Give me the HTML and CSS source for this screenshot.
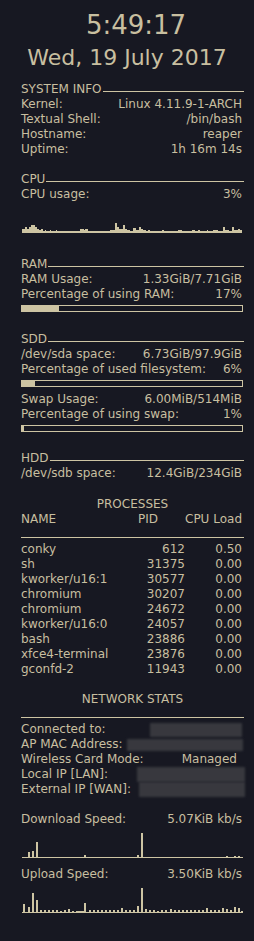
FILE: index.html
```html
<!DOCTYPE html>
<html lang="en">
<head>
    <meta charset="UTF-8">
    <title>conky</title>
    <link rel="stylesheet" href="styles.css">
</head>
<body>
    <div class="panel">
        <div class="clock">5:49:17</div>
        <div class="date">Wed, 19 July 2017</div>

        <div class="head sys"><span>SYSTEM INFO</span><i class="rule"></i></div>
        <div class="row"><span>Kernel:</span><span>Linux 4.11.9-1-ARCH</span></div>
        <div class="row"><span>Textual Shell:</span><span>/bin/bash</span></div>
        <div class="row"><span>Hostname:</span><span>reaper</span></div>
        <div class="row"><span>Uptime:</span><span>1h 16m 14s</span></div>

        <div class="head cpu"><span>CPU</span><i class="rule"></i></div>
        <div class="row"><span>CPU usage:</span><span>3%</span></div>
        <svg class="graph cpugraph" width="222" height="14" viewBox="0 0 222 14">
            <path d="M1 13 V9 H4 V7 H6 V9 H8 V7 H10 V5 H14 V7 H16 V9 H18 V10 H20 V9 H22 V11 H24 V10 H25 V11 H29 V10 H30 V11 H35 V10 H36 V11 H59 V9 H63 V10 H64 V9 H67 V11 H89 V10 H94 V3 H96 V7 H98 V9 H102 V5 H104 V9 H106 V10 H109 V11 H112 V8 H115 V10 H118 V7 H120 V9 H122 V10 H125 V11 H127 V10 H129 V11 H141 V10 H143 V11 H157 V10 H161 V11 H171 V10 H174 V11 H177 V10 H179 V11 H186 V10 H187 V11 H192 V10 H197 V11 H202 V7 H204 V10 H208 V11 H211 V7 H213 V10 H217 V9 H219 V10 H221 V13 Z"/>
        </svg>

        <div class="head ram"><span>RAM</span><i class="rule"></i></div>
        <div class="row"><span>RAM Usage:</span><span>1.33GiB/7.71GiB</span></div>
        <div class="row"><span>Percentage of using RAM:</span><span>17%</span></div>
        <div class="bar"><div class="fill" style="width: 17%"></div></div>

        <div class="head sdd"><span>SDD</span><i class="rule"></i></div>
        <div class="row"><span>/dev/sda space:</span><span>6.73GiB/97.9GiB</span></div>
        <div class="row"><span>Percentage of used filesystem:</span><span>6%</span></div>
        <div class="bar"><div class="fill" style="width: 6%"></div></div>
        <div class="row swap"><span>Swap Usage:</span><span>6.00MiB/514MiB</span></div>
        <div class="row"><span>Percentage of using swap:</span><span>1%</span></div>
        <div class="bar"><div class="fill" style="width: 1%"></div></div>

        <div class="head hdd"><span>HDD</span><i class="rule"></i></div>
        <div class="row"><span>/dev/sdb space:</span><span>12.4GiB/234GiB</span></div>

        <div class="title procs">PROCESSES</div>
        <div class="proc proc-head"><span>NAME</span><span class="pid-head">PID</span><span>CPU Load</span></div>
        <div class="line"></div>
        <div class="proc"><span>conky</span><span>612</span><span>0.50</span></div>
        <div class="proc"><span>sh</span><span>31375</span><span>0.00</span></div>
        <div class="proc"><span>kworker/u16:1</span><span>30577</span><span>0.00</span></div>
        <div class="proc"><span>chromium</span><span>30207</span><span>0.00</span></div>
        <div class="proc"><span>chromium</span><span>24672</span><span>0.00</span></div>
        <div class="proc"><span>kworker/u16:0</span><span>24057</span><span>0.00</span></div>
        <div class="proc"><span>bash</span><span>23886</span><span>0.00</span></div>
        <div class="proc"><span>xfce4-terminal</span><span>23876</span><span>0.00</span></div>
        <div class="proc"><span>gconfd-2</span><span>11943</span><span>0.00</span></div>

        <div class="title net">NETWORK STATS</div>
        <div class="line"></div>
        <div class="row"><span>Connected to:</span><span class="hidden essid"></span></div>
        <div class="row"><span>AP MAC Address:</span><span class="hidden mac"></span></div>
        <div class="row"><span>Wireless Card Mode:</span><span class="mode">Managed</span></div>
        <div class="row"><span>Local IP [LAN]:</span><span class="hidden lan"></span></div>
        <div class="row"><span>External IP [WAN]:</span><span class="hidden wan"></span></div>

        <div class="row speed"><span>Download Speed:</span><span>5.07KiB kb/s</span></div>
        <svg class="graph netgraph" width="222" height="28" viewBox="0 0 222 28">
            <rect x="1" y="27" width="221" height="1"/>
            <rect x="7" y="22" width="2" height="6"/>
            <rect x="11" y="21" width="2" height="7"/>
            <rect x="15" y="12" width="2" height="16"/>
            <rect x="63" y="25" width="2" height="3"/>
            <rect x="116" y="25" width="2" height="3"/>
            <rect x="120" y="3" width="2" height="25"/>
            <rect x="205" y="26" width="2" height="2"/>
            <rect x="213" y="26" width="2" height="2"/>
            <rect x="217" y="26" width="2" height="2"/>
        </svg>

        <div class="row speed up"><span>Upload Speed:</span><span>3.50KiB kb/s</span></div>
        <svg class="graph netgraph" width="222" height="28" viewBox="0 0 222 28">
            <rect x="1" y="27" width="221" height="1"/>
            <rect x="2" y="19" width="2" height="9"/>
            <rect x="7" y="22" width="2" height="6"/>
            <rect x="11" y="8" width="2" height="20"/>
            <rect x="15" y="15" width="2" height="13"/>
            <rect x="19" y="25" width="2" height="3"/>
            <rect x="23" y="25" width="2" height="3"/>
            <rect x="27" y="25" width="2" height="3"/>
            <rect x="31" y="25" width="2" height="3"/>
            <rect x="35" y="25" width="2" height="3"/>
            <rect x="39" y="26" width="2" height="2"/>
            <rect x="43" y="25" width="2" height="3"/>
            <rect x="47" y="24" width="2" height="4"/>
            <rect x="51" y="26" width="2" height="2"/>
            <rect x="55" y="26" width="8" height="2"/>
            <rect x="63" y="18" width="2" height="10"/>
            <rect x="68" y="25" width="2" height="3"/>
            <rect x="72" y="25" width="2" height="3"/>
            <rect x="76" y="25" width="2" height="3"/>
            <rect x="80" y="25" width="2" height="3"/>
            <rect x="84" y="25" width="2" height="3"/>
            <rect x="88" y="25" width="2" height="3"/>
            <rect x="92" y="25" width="2" height="3"/>
            <rect x="96" y="25" width="2" height="3"/>
            <rect x="100" y="23" width="2" height="5"/>
            <rect x="104" y="25" width="2" height="3"/>
            <rect x="108" y="25" width="2" height="3"/>
            <rect x="112" y="25" width="2" height="3"/>
            <rect x="116" y="21" width="2" height="7"/>
            <rect x="120" y="3" width="2" height="25"/>
            <rect x="124" y="24" width="2" height="4"/>
            <rect x="128" y="25" width="2" height="3"/>
            <rect x="132" y="25" width="2" height="3"/>
            <rect x="136" y="26" width="2" height="2"/>
            <rect x="140" y="25" width="2" height="3"/>
            <rect x="144" y="25" width="2" height="3"/>
            <rect x="149" y="24" width="2" height="4"/>
            <rect x="153" y="25" width="2" height="3"/>
            <rect x="157" y="25" width="2" height="3"/>
            <rect x="161" y="25" width="2" height="3"/>
            <rect x="165" y="25" width="2" height="3"/>
            <rect x="169" y="25" width="2" height="3"/>
            <rect x="173" y="25" width="2" height="3"/>
            <rect x="177" y="25" width="2" height="3"/>
            <rect x="181" y="25" width="2" height="3"/>
            <rect x="185" y="23" width="2" height="5"/>
            <rect x="189" y="25" width="2" height="3"/>
            <rect x="193" y="25" width="2" height="3"/>
            <rect x="197" y="25" width="2" height="3"/>
            <rect x="201" y="23" width="2" height="5"/>
            <rect x="205" y="24" width="2" height="4"/>
            <rect x="209" y="25" width="2" height="3"/>
            <rect x="213" y="22" width="2" height="6"/>
            <rect x="217" y="23" width="2" height="5"/>
            <rect x="220" y="26" width="2" height="2"/>
        </svg>
    </div>
</body>
</html>
```

FILE: styles.css
```css
body { margin: 0; background-color: #171822; color: #c8bfa0; font-family: "DejaVu Sans", sans-serif; font-size: 12px; line-height: 15px; }
.panel { width: 223px; padding: 10px 10px 30px 21px; }

.clock { font-size: 26px; line-height: 30px; text-align: center; padding-left: 7px; }
.date { font-size: 22px; line-height: 36px; text-align: center; margin-left: -21px; margin-right: -10px; }

/* section header with a rule running to the edge */
.head { display: flex; align-items: flex-end; }
.head .rule { flex: 1; height: 1px; margin: 0 0 5px 1px; background-color: #cdc4a3; }
.sys { margin-top: 6px; }
.cpu { margin-top: 15px; }
.ram { margin-top: 23px; }
.sdd { margin-top: 20px; }
.hdd { margin-top: 19px; }

.row { display: flex; justify-content: space-between; padding-right: 2px; white-space: nowrap; }
.swap { margin-top: 5px; }
.mode { padding-right: 5px; }

.graph { display: block; fill: #cdc4a3; }
.cpugraph { margin-top: 18px; }
.netgraph { margin-top: 3px; }
.speed { margin-top: 15px; }
.speed.up { margin-top: 9px; }

.bar { width: 222px; height: 7px; margin-top: 3px; box-sizing: border-box; border: 1px solid #cdc4a3; }
.bar .fill { height: 100%; background-color: #cdc4a3; }

.title { text-align: center; }
.procs { margin-top: 16px; }
.net { margin-top: 15px; }
.line { height: 1px; margin: 10px 0 4px; background-color: #cdc4a3; }

.proc { display: grid; grid-template-columns: 117px 47px 57px; white-space: nowrap; }
.proc span { text-align: right; }
.proc span:first-child { text-align: left; }
.proc-head .pid-head { text-align: left; }

/* redacted values */
.hidden { display: block; background-color: #38383e; filter: blur(1px); }
.essid { width: 92px; height: 14px; margin-top: 1px; }
.mac { width: 116px; height: 12px; margin: 2px -1px 0 0; }
.lan { width: 108px; height: 15px; margin-right: -3px; }
.wan { width: 106px; height: 15px; margin-right: -3px; }
```
